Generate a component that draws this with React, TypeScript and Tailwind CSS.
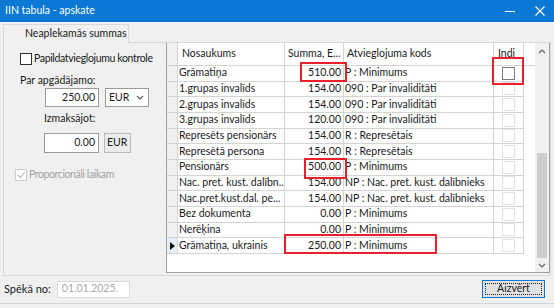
import React from "react";

const rows: [string, string, string][] = [
  ["Grāmatiņa", "510.00", "P : Minimums"],
  ["1.grupas invalīds", "154.00", "090 : Par invaliditāti"],
  ["2.grupas invalīds", "154.00", "090 : Par invaliditāti"],
  ["3.grupas invalīds", "120.00", "090 : Par invaliditāti"],
  ["Represēts pensionārs", "154.00", "R : Represētais"],
  ["Represētā persona", "154.00", "R : Represētais"],
  ["Pensionārs", "500.00", "P : Minimums"],
  ["Nac. pret. kust. dalībn...", "154.00", "NP : Nac. pret. kust. dalībnieks"],
  ["Nac.pret.kust.dal. pe...", "154.00", "NP : Nac. pret. kust. dalībnieks"],
  ["Bez dokumenta", "0.00", "P : Minimums"],
  ["Nerēķina", "0.00", "P : Minimums"],
  ["Grāmatiņa, ukrainis", "250.00", "P : Minimums"],
];

const font = { fontFamily: '"Lato", "Liberation Sans", sans-serif' };

function Chevron({ up }: { up?: boolean }) {
  return (
    <svg width="8" height="5" viewBox="0 0 8 5" className="text-[#606060]">
      <polyline
        points={up ? "1,4 4,1 7,4" : "1,1 4,4 7,1"}
        fill="none"
        stroke="currentColor"
        strokeWidth="1.2"
      />
    </svg>
  );
}

function GridBody() {
  return (
    <div className="flex h-full border-l border-b border-r border-[#a0a0a0] bg-white">
      <div className="flex w-[368px] flex-col">
        {/* header */}
        <div className="flex h-[23px] border-b border-[#d4d4d4] text-[#1a1a1a]">
          <div className="w-[11px] border-r border-[#d4d4d4] bg-[#f0f0f0]" />
          <div className="flex w-[107px] items-center border-r border-[#d4d4d4] pl-[4px]">Nosaukums</div>
          <div className="flex w-[59px] items-center border-r border-[#d4d4d4] pl-[3px] whitespace-nowrap overflow-hidden">Summa, E...</div>
          <div className="flex w-[150px] items-center border-r border-[#d4d4d4] pl-[3px]">Atvieglojuma kods</div>
          <div className="flex w-[30px] items-center border-r border-[#d4d4d4] pl-[4px]">Indi</div>
          <div className="w-[11px]" />
        </div>
        {rows.map(([name, sum, code], i) => {
          const last = i === rows.length - 1;
          return (
            <div key={i} className="flex h-[15.67px] text-[#1a1a1a]">
              <div
                className={`flex w-[11px] items-center justify-center border-r border-b border-[#d4d4d4] ${last ? "bg-[#e4edf8]" : "bg-[#f0f0f0]"}`}
              >
                {last ? (
                  <svg width="5" height="8" viewBox="0 0 5 8">
                    <polygon points="0,0 5,4 0,8" fill="#111" />
                  </svg>
                ) : null}
              </div>
              <div className="flex w-[107px] items-center overflow-hidden whitespace-nowrap border-r border-b border-[#d4d4d4] pl-[1px]">
                {name}
              </div>
              <div className="flex w-[59px] items-center justify-end border-r border-b border-[#d4d4d4] pr-[2px]">
                {sum}
              </div>
              <div className="flex w-[150px] items-center overflow-hidden whitespace-nowrap border-r border-b border-[#d4d4d4] pl-[1px]">
                {code}
              </div>
              <div className="flex w-[30px] items-center justify-center border-r border-b border-[#d4d4d4]">
                <div
                  className={`h-[13px] w-[13px] border bg-white ${i === 0 ? "border-[#7a7a7a]" : "border-[#e2e2e2]"}`}
                />
              </div>
              <div className="w-[11px]" />
            </div>
          );
        })}
        <div className="flex-1" />
      </div>
      {/* scrollbar */}
      <div className="flex w-[14px] flex-col bg-[#f0f0f0]">
        <div className="flex h-[17px] items-center justify-center">
          <Chevron up />
        </div>
        <div className="flex flex-1 flex-col px-[2px]">
          <div className="flex-1" />
          <div className="h-[105px] bg-[#cdcdcd]" />
        </div>
        <div className="flex h-[14px] items-center justify-center">
          <Chevron />
        </div>
      </div>
    </div>
  );
}

function Check({ disabled, checked }: { disabled?: boolean; checked?: boolean }) {
  return (
    <div
      className={`flex h-[12px] w-[12px] shrink-0 items-center justify-center border bg-white ${disabled ? "border-[#cccccc]" : "border-[#333333]"}`}
    >
      {checked ? (
        <svg width="9" height="8" viewBox="0 0 9 8">
          <polyline points="1,4 3.5,6.5 8,1" fill="none" stroke="#b5b5b5" strokeWidth="1.1" />
        </svg>
      ) : null}
    </div>
  );
}

function LeftPanel() {
  return (
    <div className="flex w-[162px] flex-col text-[#1a1a1a]">
      <div className="mt-[10px] ml-[16px] flex h-[12px] items-center gap-[2px]">
        <Check />
        <span className="whitespace-nowrap tracking-[-0.35px]">Papildatvieglojumu kontrole</span>
      </div>
      <div className="mt-[9px] ml-[16px] h-[13px] leading-[13px]">Par apgādājamo:</div>
      <div className="mt-[1px] flex h-[19px]">
        <div className="ml-[41px] flex w-[54px] items-center justify-end border border-[#9a9a9a] bg-white pr-[3px]">
          250.00
        </div>
        <div className="ml-[6px] flex w-[44px] items-center justify-between border border-[#9a9a9a] bg-white pl-[3px] pr-[4px]">
          <span>EUR</span>
          <Chevron />
        </div>
      </div>
      <div className="mt-[5px] ml-[40px] h-[13px] leading-[13px]">Izmaksājot:</div>
      <div className="mt-[8px] flex h-[20px]">
        <div className="ml-[40px] flex w-[55px] items-center justify-end border border-[#9a9a9a] bg-white pr-[3px]">
          0.00
        </div>
        <div className="ml-[5px] flex w-[27px] items-center border border-[#b9b9b9] bg-[#ececec] pl-[2px]">
          EUR
        </div>
      </div>
      <div className="mt-[16px] ml-[11px] flex h-[12px] items-center gap-[2px] text-[#a3a3a3]">
        <Check disabled checked />
        <span className="whitespace-nowrap tracking-[-0.4px]">Proporcionāli laikam</span>
      </div>
    </div>
  );
}

export default function App() {
  return (
    <div
      className="relative h-[308px] w-[554px] overflow-hidden bg-[#f0f0f0] text-[10.5px]"
      style={font}
    >
      {/* title bar */}
      <div className="flex h-[22px] items-center bg-[#0a78d4] pl-[5px] text-[10.5px] text-white">
        <span>IIN tabula - apskate</span>
        <div className="ml-auto flex items-center">
          <svg width="10" height="10" viewBox="0 0 10 10" className="mr-[20px]">
            <line x1="0" y1="5.5" x2="10" y2="5.5" stroke="white" strokeWidth="1" />
          </svg>
          <svg width="10" height="10" viewBox="0 0 10 10" className="mr-[9px]">
            <line x1="0.5" y1="0.5" x2="9.5" y2="9.5" stroke="white" strokeWidth="1.3" />
            <line x1="9.5" y1="0.5" x2="0.5" y2="9.5" stroke="white" strokeWidth="1.3" />
          </svg>
        </div>
      </div>

      {/* tabs */}
      <div className="flex h-[20px] items-end pl-[3px]">
        <div className="-mb-px flex h-[19px] w-[126px] items-center border border-b-0 border-[#d9d9d9] bg-[#f0f0f0] pl-[21px] text-[10.5px] text-[#1a1a1a]">
          Neaplekamās summas
        </div>
      </div>

      {/* panel */}
      <div className="mx-[3px] flex h-[234px] border border-[#d9d9d9]">
        <LeftPanel />
        <div className="h-[230px] w-[384px] -mr-[1px]">
          <GridBody />
        </div>
      </div>

      {/* footer */}
      <div className="flex h-[28px] items-center border-b border-[#d4d4d4] pb-[1px] text-[#1a1a1a]">
        <span className="ml-[4px] text-[11px]">Spēkā no:</span>
        <div className="ml-[6px] flex h-[17px] w-[73px] items-center border border-[#dadada] bg-white pl-[4px] text-[#a8a8a8]">
          01.01.2025.
        </div>
        <div className="mr-[9px] ml-auto flex h-[18px] w-[63px] items-center justify-center border border-[#0078d7] bg-[#e1e1e1] p-[2px]">
          <div className="flex h-full w-full items-center justify-center border border-dotted border-[#222]">
            Aizvērt
          </div>
        </div>
      </div>

      {/* red annotation boxes */}
      <div className="pointer-events-none absolute left-[300px] top-[62px] h-[20px] w-[47px] border-2 border-[#e8212b]" />
      <div className="pointer-events-none absolute left-[492px] top-[57px] h-[28px] w-[32px] border-2 border-[#e8212b]" />
      <div className="pointer-events-none absolute left-[304px] top-[158px] h-[21px] w-[43px] border-2 border-[#e8212b]" />
      <div className="pointer-events-none absolute left-[284px] top-[234px] h-[20px] w-[153px] border-2 border-[#e8212b]" />
    </div>
  );
}
